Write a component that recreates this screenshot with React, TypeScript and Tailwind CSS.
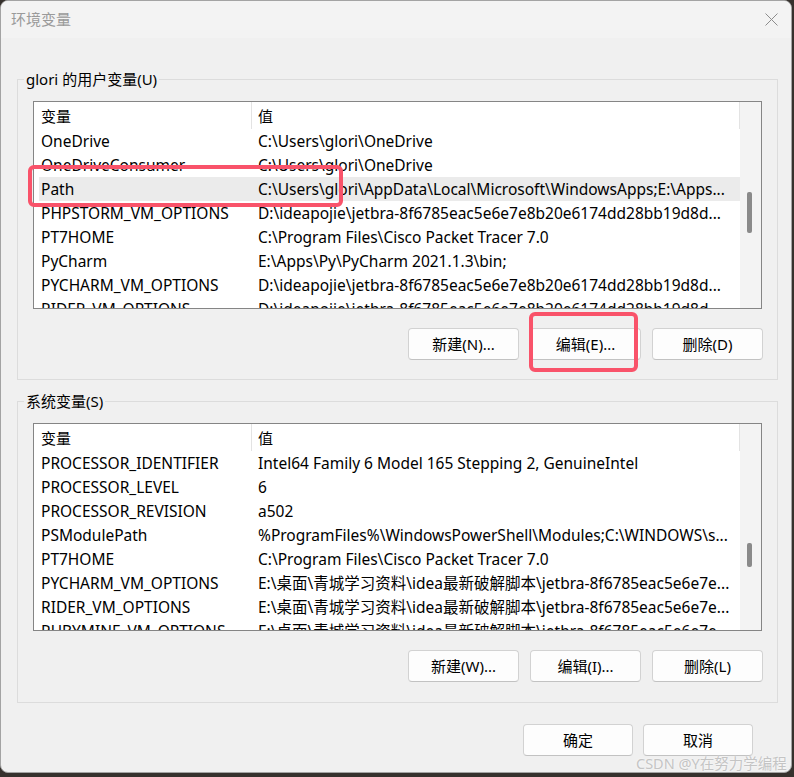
import React from 'react';

const FONT = { fontFamily: '"Noto Sans", "Noto Sans CJK SC", sans-serif' };

type Row = { name: string; value: string; selected?: boolean };

const userVars: Row[] = [
  { name: 'OneDrive', value: 'C:\\Users\\glori\\OneDrive' },
  { name: 'OneDriveConsumer', value: 'C:\\Users\\glori\\OneDrive' },
  { name: 'Path', value: 'C:\\Users\\glori\\AppData\\Local\\Microsoft\\WindowsApps;E:\\Apps...', selected: true },
  { name: 'PHPSTORM_VM_OPTIONS', value: 'D:\\ideapojie\\jetbra-8f6785eac5e6e7e8b20e6174dd28bb19d8d...' },
  { name: 'PT7HOME', value: 'C:\\Program Files\\Cisco Packet Tracer 7.0' },
  { name: 'PyCharm', value: 'E:\\Apps\\Py\\PyCharm 2021.1.3\\bin;' },
  { name: 'PYCHARM_VM_OPTIONS', value: 'D:\\ideapojie\\jetbra-8f6785eac5e6e7e8b20e6174dd28bb19d8d...' },
  { name: 'RIDER_VM_OPTIONS', value: 'D:\\ideapojie\\jetbra-8f6785eac5e6e7e8b20e6174dd28bb19d8d...' },
];

const jetbraPath = 'E:\\桌面\\青城学习资料\\idea最新破解脚本\\jetbra-8f6785eac5e6e7e...';

const systemVars: Row[] = [
  { name: 'PROCESSOR_IDENTIFIER', value: 'Intel64 Family 6 Model 165 Stepping 2, GenuineIntel' },
  { name: 'PROCESSOR_LEVEL', value: '6' },
  { name: 'PROCESSOR_REVISION', value: 'a502' },
  { name: 'PSModulePath', value: '%ProgramFiles%\\WindowsPowerShell\\Modules;C:\\WINDOWS\\s...' },
  { name: 'PT7HOME', value: 'C:\\Program Files\\Cisco Packet Tracer 7.0' },
  { name: 'PYCHARM_VM_OPTIONS', value: jetbraPath },
  { name: 'RIDER_VM_OPTIONS', value: jetbraPath },
  { name: 'RUBYMINE_VM_OPTIONS', value: jetbraPath },
];

const VarList = ({ rows, thumbTop, thumbHeight }: { rows: Row[]; thumbTop: number; thumbHeight: number }) => (
  <div className="w-[729px] h-[208px] border border-[#858585] bg-white flex overflow-hidden">
    <div className="w-[706px] flex flex-col overflow-hidden">
      <div className="h-[27px] flex shrink-0 text-[15px] text-black">
        <div className="w-[218px] pl-[7px] pt-[1px] flex items-center border-r border-[#e3e3e3]">变量</div>
        <div className="w-[488px] pl-[6px] pt-[1px] flex items-center border-r border-[#e3e3e3]">值</div>
      </div>
      {rows.map((r) => (
        <div key={r.name} className="h-[24px] flex shrink-0">
          <div className="w-[5px] shrink-0" />
          <div className={`flex flex-1 items-center pt-[2px] text-[15.5px] text-black ${r.selected ? 'bg-[#ebebeb]' : ''}`}>
            <span className="w-[213px] shrink-0 pl-[2px] whitespace-nowrap overflow-hidden">{r.name}</span>
            <span className="w-[488px] shrink-0 pl-[6px] pr-[4px] whitespace-nowrap overflow-hidden">{r.value}</span>
          </div>
        </div>
      ))}
    </div>
    <div className="w-[21px] bg-[#f3f3f3] flex flex-col">
      <div style={{ height: thumbTop }} />
      <div className="w-[5px] ml-[7px] rounded-[2px] bg-[#8a8a8a]" style={{ height: thumbHeight }} />
    </div>
  </div>
);

const Btn = ({ label, w = 'w-[111px]' }: { label: string; w?: string }) => (
  <button className={`${w} h-[32px] rounded-[4px] border border-[#d2d2d2] border-b-[#c2c2c2] bg-[#fdfdfd] text-[15px] text-black flex items-center justify-center`}>
    {label}
  </button>
);

const Group = ({ title, children, className = '' }: { title: string; children: React.ReactNode; className?: string }) => (
  <fieldset className={`ml-[16px] w-[761px] border border-[#dcdcdc] pl-[6px] pr-[14px] ${className}`}>
    <legend className="px-[2px] text-[15px] leading-[20px] text-black">{title}</legend>
    <div className="pl-[9px] pt-[12px]">{children}</div>
  </fieldset>
);

export default function App() {
  return (
    <div className="w-[794px] h-[777px] bg-[#36312d] relative overflow-hidden" style={FONT}>
      <div className="w-[792px] h-[773px] rounded-[8px] border border-[#a3a3a3] bg-[#f0f0f0] overflow-hidden flex flex-col">
        {/* title bar */}
        <div className="h-[37px] shrink-0 bg-[#f3f3f3] flex items-center justify-between pl-[10px] pr-[13px]">
          <span className="text-[15px] text-[#9a9a9a]">环境变量</span>
          <svg width="13" height="13" viewBox="0 0 13 13">
            <path d="M0.5 0.5 L12.5 12.5 M12.5 0.5 L0.5 12.5" stroke="#8c8c8c" strokeWidth="1" fill="none" />
          </svg>
        </div>

        <Group title="glori 的用户变量(U)" className="mt-[31px] pb-[19px]">
          <VarList rows={userVars} thumbTop={90} thumbHeight={41} />
          <div className="mt-[19px] flex justify-end gap-[11px]">
            <Btn label="新建(N)..." />
            <Btn label="编辑(E)..." />
            <Btn label="删除(D)" />
          </div>
        </Group>

        <Group title="系统变量(S)" className="mt-[11px] pb-[20px]">
          <VarList rows={systemVars} thumbTop={119} thumbHeight={24} />
          <div className="mt-[19px] flex justify-end gap-[11px]">
            <Btn label="新建(W)..." />
            <Btn label="编辑(I)..." />
            <Btn label="删除(L)" />
          </div>
        </Group>

        <div className="mt-[21px] pr-[38px] flex justify-end gap-[10px]">
          <Btn label="确定" w="w-[110px]" />
          <Btn label="取消" w="w-[110px]" />
        </div>
      </div>

      {/* annotation boxes */}
      <div className="absolute left-[28px] top-[165px] w-[315px] h-[42px] rounded-[6px] border-[4px] border-[#f9536a]" />
      <div className="absolute left-[529px] top-[312px] w-[109px] h-[60px] rounded-[6px] border-[4px] border-[#f9536a]" />

      {/* watermark */}
      <div className="absolute left-[636px] top-[753px] text-[14.5px] text-[#c4c4c4] whitespace-nowrap [text-shadow:0_0_2px_#ffffff]">
        CSDN @Y在努力学编程
      </div>
    </div>
  );
}
